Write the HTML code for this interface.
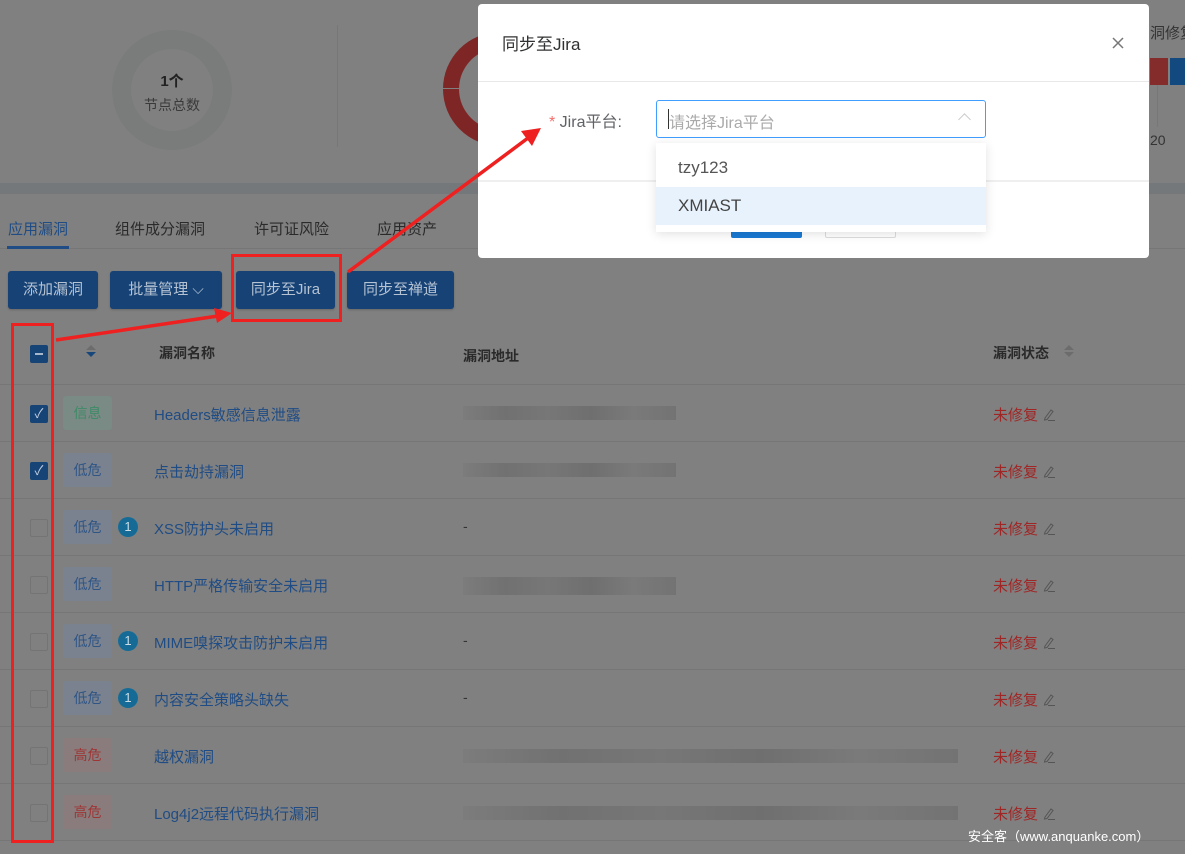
<!DOCTYPE html>
<html><head><meta charset="utf-8"><style>
*{margin:0;padding:0;box-sizing:border-box}
body{width:1185px;height:854px;overflow:hidden;background:#808080;font-family:"Liberation Sans","Noto Sans CJK SC",sans-serif;position:relative;font-size:14px}
.a{position:absolute;white-space:nowrap}
.btn{position:absolute;top:271px;height:38px;background:#164275;color:#b6c3d3;font-size:15px;line-height:38px;text-align:center;border-radius:3px;box-shadow:0 1px 2px rgba(0,0,0,.2)}
.row{position:absolute;left:0;width:1185px;height:57px;border-bottom:1px solid #767676}
.cb{position:absolute;left:30px;width:18px;height:18px;border:1px solid #747474;border-radius:2px;background:#808080}
.cb.on{background:#174477;border-color:#174477}
.tag{position:absolute;left:63px;width:49px;height:34px;border-radius:3px;line-height:34px;text-align:center;font-size:14px}
.low{background:#7a8290;color:#2f5585}
.info{background:#7a8a84;color:#3f8a68}
.high{background:#8a7c7c;color:#9e3535}
.bd{position:absolute;left:118px;width:20px;height:20px;border-radius:50%;background:#166b96;color:#c8dde8;font-size:13px;line-height:20px;text-align:center}
.nm{position:absolute;left:154px;color:#1f4c84;font-size:15px}
.ad{position:absolute;left:463px;color:#333}
.st{position:absolute;left:993px;color:#a02525;font-size:15px;white-space:nowrap}
.st svg{vertical-align:-2px;margin-left:4px}
.blur{position:absolute;left:463px;height:14px;width:213px;background:linear-gradient(90deg,#7c7c7c,#717171 20%,#777 40%,#6f6f6f 60%,#7a7a7a 80%,#737373)}
</style></head><body>
<!-- top stats -->
<div class="a" style="left:112px;top:30px;width:120px;height:120px;border-radius:50%;background:#7a7c7b"></div>
<div class="a" style="left:131px;top:49px;width:82px;height:82px;border-radius:50%;background:#7f807f"></div>
<div class="a" style="left:112px;top:70px;width:120px;text-align:center;font-weight:bold;font-size:15px;color:#222">1个</div>
<div class="a" style="left:112px;top:95px;width:120px;text-align:center;font-size:14px;color:#3a3a3a">节点总数</div>
<div class="a" style="left:337px;top:25px;width:1px;height:122px;background:#777"></div>
<div class="a" style="left:443px;top:32px;width:114px;height:114px;border-radius:50%;background:conic-gradient(#0f4477 0 180deg,#7e2626 180deg 360deg)"></div>
<div class="a" style="left:459px;top:48px;width:82px;height:82px;border-radius:50%;background:#808080"></div>
<div class="a" style="left:443px;top:88px;width:30px;height:1px;background:#808080"></div>
<div class="a" style="left:0;top:183px;width:1185px;height:11px;background:#75787b"></div>
<div class="a" style="left:1150px;top:22px;color:#333;font-size:15px">洞修复</div>
<div class="a" style="left:1150px;top:58px;width:18px;height:27px;background:#842b2b"></div>
<div class="a" style="left:1170px;top:58px;width:15px;height:27px;background:#124a80"></div>
<div class="a" style="left:1157px;top:85px;width:1px;height:42px;background:#777"></div>
<div class="a" style="left:1150px;top:132px;color:#333;font-size:14px">20</div>
<!-- tabs -->
<div class="a" style="left:8px;top:218px;color:#1f4c84;font-size:15px">应用漏洞</div>
<div class="a" style="left:115px;top:218px;color:#2a2a2a;font-size:15px">组件成分漏洞</div>
<div class="a" style="left:254px;top:218px;color:#2a2a2a;font-size:15px">许可证风险</div>
<div class="a" style="left:377px;top:218px;color:#2a2a2a;font-size:15px">应用资产</div>
<div class="a" style="left:0;top:248px;width:1185px;height:1px;background:#767676"></div>
<div class="a" style="left:7px;top:246px;width:62px;height:3px;background:#1f4c84"></div>
<div class="btn" style="left:8px;width:90px">添加漏洞</div>
<div class="btn" style="left:110px;width:112px">批量管理 ⌵</div>
<div class="btn" style="left:236px;width:99px">同步至Jira</div>
<div class="btn" style="left:347px;width:107px">同步至禅道</div>
<!-- table header -->
<div class="row" style="top:327px;height:58px"></div>
<div class="cb on" style="top:345px"><div class="a" style="left:4px;top:7px;width:8px;height:2px;background:#a8b8cc"></div></div>
<div class="a" style="left:86px;top:345px;width:0;height:0;border:5px solid transparent;border-bottom-color:#6c6c6c;border-top:0"></div>
<div class="a" style="left:86px;top:352px;width:0;height:0;border:5px solid transparent;border-top-color:#17467a;border-bottom:0"></div>
<div class="a" style="left:159px;top:343px;font-weight:bold;color:#2a2a2a">漏洞名称</div>
<div class="a" style="left:463px;top:346px;font-weight:bold;color:#2a2a2a">漏洞地址</div>
<div class="a" style="left:993px;top:343px;font-weight:bold;color:#2a2a2a">漏洞状态</div>
<div class="a" style="left:1064px;top:345px;width:0;height:0;border:5px solid transparent;border-bottom-color:#6c6c6c;border-top:0"></div>
<div class="a" style="left:1064px;top:352px;width:0;height:0;border:5px solid transparent;border-top-color:#6c6c6c;border-bottom:0"></div>

<div class="row" style="top:385px"></div>
<div class="cb on" style="top:405px;color:#c0cde0;font-size:13px;line-height:16px;text-align:center">✓</div>
<div class="tag info" style="top:396px">信息</div>
<div class="nm" style="top:404px">Headers敏感信息泄露</div>
<div class="blur" style="top:406px"></div>
<div class="st" style="top:404px">未修复<svg width="14" height="14" viewBox="0 0 14 14"><path d="M3 10 L9 2 L11 3.5 L5 11.5 L2.5 12 Z M6 12.5 H13" fill="none" stroke="#555" stroke-width="1"/></svg></div>

<div class="row" style="top:442px"></div>
<div class="cb on" style="top:462px;color:#c0cde0;font-size:13px;line-height:16px;text-align:center">✓</div>
<div class="tag low" style="top:453px">低危</div>
<div class="nm" style="top:461px">点击劫持漏洞</div>
<div class="blur" style="top:463px"></div>
<div class="st" style="top:461px">未修复<svg width="14" height="14" viewBox="0 0 14 14"><path d="M3 10 L9 2 L11 3.5 L5 11.5 L2.5 12 Z M6 12.5 H13" fill="none" stroke="#555" stroke-width="1"/></svg></div>

<div class="row" style="top:499px"></div>
<div class="cb" style="top:519px"></div>
<div class="tag low" style="top:510px">低危</div><div class="bd" style="top:517px">1</div>
<div class="nm" style="top:518px">XSS防护头未启用</div>
<div class="ad" style="top:518px">-</div>
<div class="st" style="top:518px">未修复<svg width="14" height="14" viewBox="0 0 14 14"><path d="M3 10 L9 2 L11 3.5 L5 11.5 L2.5 12 Z M6 12.5 H13" fill="none" stroke="#555" stroke-width="1"/></svg></div>

<div class="row" style="top:556px"></div>
<div class="cb" style="top:576px"></div>
<div class="tag low" style="top:567px">低危</div>
<div class="nm" style="top:575px">HTTP严格传输安全未启用</div>
<div class="blur" style="top:577px;height:18px"></div>
<div class="st" style="top:575px">未修复<svg width="14" height="14" viewBox="0 0 14 14"><path d="M3 10 L9 2 L11 3.5 L5 11.5 L2.5 12 Z M6 12.5 H13" fill="none" stroke="#555" stroke-width="1"/></svg></div>

<div class="row" style="top:613px"></div>
<div class="cb" style="top:633px"></div>
<div class="tag low" style="top:624px">低危</div><div class="bd" style="top:631px">1</div>
<div class="nm" style="top:632px">MIME嗅探攻击防护未启用</div>
<div class="ad" style="top:632px">-</div>
<div class="st" style="top:632px">未修复<svg width="14" height="14" viewBox="0 0 14 14"><path d="M3 10 L9 2 L11 3.5 L5 11.5 L2.5 12 Z M6 12.5 H13" fill="none" stroke="#555" stroke-width="1"/></svg></div>

<div class="row" style="top:670px"></div>
<div class="cb" style="top:690px"></div>
<div class="tag low" style="top:681px">低危</div><div class="bd" style="top:688px">1</div>
<div class="nm" style="top:689px">内容安全策略头缺失</div>
<div class="ad" style="top:689px">-</div>
<div class="st" style="top:689px">未修复<svg width="14" height="14" viewBox="0 0 14 14"><path d="M3 10 L9 2 L11 3.5 L5 11.5 L2.5 12 Z M6 12.5 H13" fill="none" stroke="#555" stroke-width="1"/></svg></div>

<div class="row" style="top:727px"></div>
<div class="cb" style="top:747px"></div>
<div class="tag high" style="top:738px">高危</div>
<div class="nm" style="top:746px">越权漏洞</div>
<div class="blur" style="top:749px;width:495px"></div>
<div class="st" style="top:746px">未修复<svg width="14" height="14" viewBox="0 0 14 14"><path d="M3 10 L9 2 L11 3.5 L5 11.5 L2.5 12 Z M6 12.5 H13" fill="none" stroke="#555" stroke-width="1"/></svg></div>

<div class="row" style="top:784px"></div>
<div class="cb" style="top:804px"></div>
<div class="tag high" style="top:795px">高危</div>
<div class="nm" style="top:803px">Log4j2远程代码执行漏洞</div>
<div class="blur" style="top:806px;width:495px"></div>
<div class="st" style="top:803px">未修复<svg width="14" height="14" viewBox="0 0 14 14"><path d="M3 10 L9 2 L11 3.5 L5 11.5 L2.5 12 Z M6 12.5 H13" fill="none" stroke="#555" stroke-width="1"/></svg></div>

<!-- modal -->
<div class="a" style="left:478px;top:4px;width:671px;height:254px;background:#fff;border-radius:4px"></div>
<div class="a" style="left:502px;top:30px;font-size:17px;color:#303133">同步至Jira</div>
<svg class="a" style="left:1112px;top:37px" width="12" height="12"><path d="M1 1 L11 11 M11 1 L1 11" stroke="#777" stroke-width="1.5"/></svg>
<div class="a" style="left:478px;top:81px;width:671px;height:1px;background:#e8e8e8"></div>
<div class="a" style="left:478px;top:180px;width:671px;height:2px;background:#efefef"></div>
<div class="a" style="left:549px;top:108px;font-size:16px;color:#606266"><span style="color:#f56c6c">*</span> Jira平台:</div>
<div class="a" style="left:656px;top:100px;width:330px;height:38px;border:1px solid #409eff;border-radius:3px"></div>
<div class="a" style="left:668px;top:109px;width:1px;height:20px;background:#333"></div>
<div class="a" style="left:669px;top:109px;font-size:16px;color:#aaa">请选择Jira平台</div>
<div class="a" style="left:960px;top:115px;width:9px;height:9px;border-left:1px solid #ccc;border-top:1px solid #ccc;transform:rotate(45deg)"></div>
<div class="a" style="left:731px;top:228px;width:71px;height:10px;background:#1a7ad4;border-radius:2px"></div>
<div class="a" style="left:825px;top:228px;width:71px;height:10px;border:1px solid #ddd;border-top:0;border-radius:2px"></div>
<div class="a" style="left:656px;top:143px;width:330px;height:89px;background:#fff;box-shadow:0 2px 10px rgba(0,0,0,.12)"></div>
<div class="a" style="left:678px;top:158px;font-size:17px;color:#555">tzy123</div>
<div class="a" style="left:656px;top:187px;width:330px;height:38px;background:#e8f2fc"></div>
<div class="a" style="left:678px;top:196px;font-size:17px;color:#444">XMIAST</div>
<!-- annotations -->
<div class="a" style="left:231px;top:254px;width:111px;height:68px;border:3px solid #ee2020"></div>
<div class="a" style="left:11px;top:323px;width:43px;height:520px;border:3px solid #ee2020"></div>
<svg class="a" style="left:0;top:0" width="1185" height="854">
<line x1="56" y1="340" x2="218" y2="316" stroke="#ee2020" stroke-width="3.5"/>
<polygon points="232,313 214,308 217,323" fill="#ee2020"/>
<line x1="348" y1="272" x2="528" y2="138" stroke="#ee2020" stroke-width="3.5"/>
<polygon points="541,128 521,131 532,146" fill="#ee2020"/>
</svg>
<div class="a" style="left:968px;top:826px;color:#fff;font-size:13px">安全客（www.anquanke.com）</div>
</body></html>
